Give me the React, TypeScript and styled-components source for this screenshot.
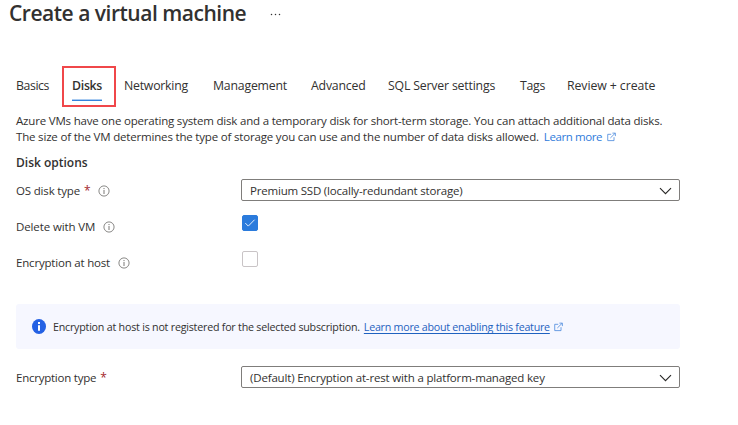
import React from 'react';
import styled, { createGlobalStyle, css } from 'styled-components';

const GlobalStyle = createGlobalStyle`
  * { box-sizing: border-box; }
  body {
    margin: 0;
    background: #fff;
    color: #323130;
    font-family: "Segoe UI", "Open Sans", sans-serif;
    font-size: 11.5px;
    line-height: 16px;
    overflow: hidden;
  }
`;

const Page = styled.main`
  width: 738px;
  height: 425px;
  display: flex;
  flex-direction: column;
`;

const Header = styled.header`
  display: flex;
  height: 66px;
  padding-left: 9px;
`;

const Title = styled.h1`
  margin: 0;
  width: 261px;
  font-size: 21px;
  font-weight: 600;
  line-height: 27px;
  letter-spacing: -0.48px;
  white-space: nowrap;
`;

const MoreButton = styled.button`
  display: flex;
  align-items: center;
  height: 29px;
  padding: 0;
  border: 0;
  background: none;
`;

const Tabs = styled.nav`
  display: grid;
  grid-template-columns: 56px 52px 89px 98px 77px 132px 47px auto;
  height: 47px;
  padding-left: 16px;
`;

const Tab = styled.a<{ $spacing: number; $active?: boolean }>`
  position: relative;
  justify-self: start;
  height: 35px;
  padding-top: 10px;
  font-size: 12.3px;
  line-height: 19px;
  letter-spacing: ${(p) => p.$spacing}px;
  white-space: nowrap;
  ${(p) =>
    p.$active &&
    css`
      font-weight: 600;
      border-bottom: 1px solid #3583dc;
      box-shadow: inset 0 -1px 0 #a9cbf1;
    `}
`;

const Highlight = styled.span`
  position: absolute;
  left: -10px;
  top: 0;
  width: 54px;
  height: 41px;
  border: 2px solid #f0474a;
`;

const Content = styled.section`
  display: flex;
  flex-direction: column;
  width: 680px;
  padding-left: 16px;
`;

const Line = styled.div`
  display: flex;
  align-items: center;
  height: 16px;
`;

const Text = styled.span<{ $spacing: number }>`
  letter-spacing: ${(p) => p.$spacing}px;
  white-space: nowrap;
`;

const Link = styled.a<{ $spacing: number; $underlined?: boolean }>`
  margin: 0 5px;
  color: ${(p) => (p.$underlined ? '#1f62c0' : '#2f7bdb')};
  letter-spacing: ${(p) => p.$spacing}px;
  white-space: nowrap;
  ${(p) =>
    p.$underlined &&
    css`
      margin: 0 4px;
      text-decoration: underline;
      text-decoration-thickness: 1px;
      text-underline-offset: 2px;
      text-decoration-skip-ink: none;
    `}
`;

const Heading = styled.h2`
  margin: 10px 0 0;
  height: 16px;
  font-size: 12px;
  font-weight: 600;
  letter-spacing: 0;
`;

const Fields = styled.div`
  display: flex;
  flex-direction: column;
  gap: 14px;
  margin-top: 8px;
`;

const Field = styled.div`
  display: grid;
  grid-template-columns: 225px 439px;
  height: 22px;
`;

const Label = styled.label`
  display: flex;
  align-items: center;
  padding-top: 2px;
`;

const Required = styled.span`
  width: 6px;
  margin-left: 4px;
  color: #a4262c;
  font-size: 12px;
`;

const Select = styled.div`
  display: flex;
  align-items: center;
  justify-content: space-between;
  height: 22px;
  padding: 1px 7px 0 8px;
  border: 1px solid #7f7d7b;
  border-radius: 2px;
`;

const Checkbox = styled.span<{ $checked?: boolean }>`
  display: flex;
  width: 16px;
  height: 16px;
  margin-left: 1px;
  border: 1px solid ${(p) => (p.$checked ? '#2b7bdc' : '#c9c4c6')};
  border-radius: 2px;
  background: ${(p) => (p.$checked ? '#2b7bdc' : '#fff')};
`;

const Banner = styled.div`
  display: flex;
  align-items: center;
  height: 45px;
  margin: 31px 0 17px;
  padding-left: 16px;
  border-radius: 3px;
  background: #f6f7ff;
  font-size: 10.7px;

  & > svg:first-child {
    margin-right: 7px;
  }
`;

const InfoSvg = styled.svg`
  margin-left: 8px;
`;

const InfoIcon = () => (
  <InfoSvg width="12" height="12" viewBox="0 0 12 12" fill="none" stroke="#6b6967">
    <circle cx="6" cy="6" r="5.1" strokeWidth="0.8" />
    <path d="M6 5v4M6 3v1.1" strokeWidth="0.9" />
  </InfoSvg>
);

const ExternalIcon = () => (
  <svg width="9" height="10" viewBox="0 0 10 10" fill="none" stroke="#4a89dc" strokeWidth="0.9">
    <path d="M4.7 2H.8v7h7V5.2M3.7 6.1 9 .9M6 .7h3.3V4" />
  </svg>
);

const Chevron = () => (
  <svg width="13" height="8" viewBox="0 0 13 8" fill="none" stroke="#292827" strokeWidth="1.15">
    <path d="m1 1.2 5.5 5.4L12 1.2" />
  </svg>
);

const Check = () => (
  <svg width="14" height="14" viewBox="0 0 14 14" fill="none" stroke="#e4effc">
    <path d="m2.3 7.1 3 3 6.3-6.4" />
  </svg>
);

const tabs = [
  { name: 'Basics', spacing: -0.41 },
  { name: 'Disks', spacing: -0.28, active: true },
  { name: 'Networking', spacing: -0.23 },
  { name: 'Management', spacing: -0.21 },
  { name: 'Advanced', spacing: -0.2 },
  { name: 'SQL Server settings', spacing: -0.18 },
  { name: 'Tags', spacing: -0.28 },
  { name: 'Review + create', spacing: -0.08 },
];

export default function App() {
  return (
    <Page>
      <GlobalStyle />
      <Header>
        <Title>Create a virtual machine</Title>
        <MoreButton aria-label="More actions">
          <svg width="12" height="3" viewBox="0 0 12 3" fill="#333">
            <circle cx="1.5" cy="1.5" r=".75" />
            <circle cx="5.5" cy="1.5" r=".75" />
            <circle cx="9.5" cy="1.5" r=".75" />
          </svg>
        </MoreButton>
      </Header>
      <Tabs>
        {tabs.map((tab) => (
          <Tab key={tab.name} $spacing={tab.spacing} $active={tab.active}>
            {tab.name}
            {tab.active && <Highlight />}
          </Tab>
        ))}
      </Tabs>
      <Content>
        <Line>
          <Text $spacing={-0.19}>
            Azure VMs have one operating system disk and a temporary disk for short-term storage. You can attach additional data disks.
          </Text>
        </Line>
        <Line>
          <Text $spacing={-0.18}>
            The size of the VM determines the type of storage you can use and the number of data disks allowed.
          </Text>
          <Link $spacing={-0.4}>Learn more</Link>
          <ExternalIcon />
        </Line>
        <Heading>Disk options</Heading>
        <Fields>
          <Field>
            <Label>
              <Text $spacing={-0.17}>OS disk type</Text>
              <Required>*</Required>
              <InfoIcon />
            </Label>
            <Select>
              <Text $spacing={-0.2}>Premium SSD (locally-redundant storage)</Text>
              <Chevron />
            </Select>
          </Field>
          <Field>
            <Label>
              <Text $spacing={-0.11}>Delete with VM</Text>
              <InfoIcon />
            </Label>
            <Checkbox $checked>
              <Check />
            </Checkbox>
          </Field>
          <Field>
            <Label>
              <Text $spacing={-0.19}>Encryption at host</Text>
              <InfoIcon />
            </Label>
            <Checkbox />
          </Field>
        </Fields>
        <Banner>
          <svg width="14" height="15" viewBox="0 0 14 15">
            <ellipse cx="7" cy="7.5" rx="7" ry="7.5" fill="#2461e4" />
            <path d="M6 3h2v2H6zM6 6.2h2v5.6H6z" fill="#fff" />
          </svg>
          <Text $spacing={-0.22}>Encryption at host is not registered for the selected subscription.</Text>
          <Link $spacing={-0.25} $underlined>
            Learn more about enabling this feature
          </Link>
          <ExternalIcon />
        </Banner>
        <Field>
          <Label>
            <Text $spacing={-0.24}>Encryption type</Text>
            <Required>*</Required>
          </Label>
          <Select>
            <Text $spacing={-0.17}>(Default) Encryption at-rest with a platform-managed key</Text>
            <Chevron />
          </Select>
        </Field>
      </Content>
    </Page>
  );
}
